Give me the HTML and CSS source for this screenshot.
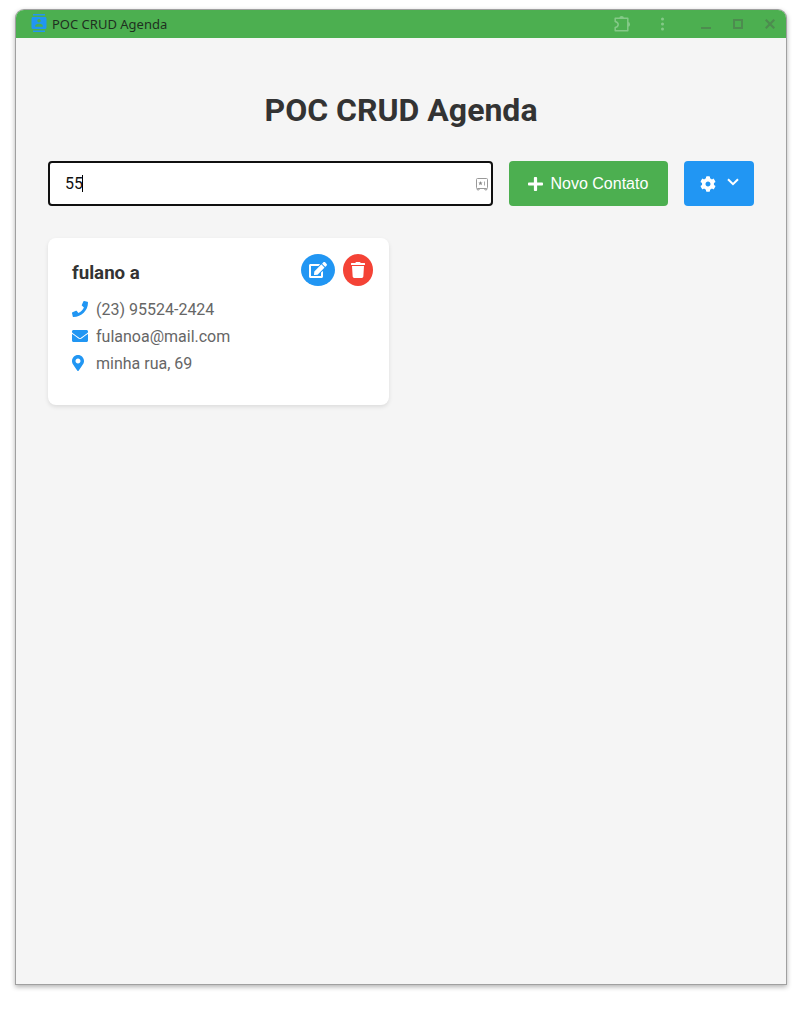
FILE: index.html
```html
<!DOCTYPE html>
<html lang="pt-BR">
<head>
<meta charset="utf-8">
<title>POC CRUD Agenda</title>
<link rel="stylesheet" href="styles.css">
</head>
<body>
<div class="window">
  <header class="titlebar">
    <svg class="app-icon" viewBox="0 0 24 24"><path fill="#2196f3" d="M20 0H4v2h16V0zM4 24h16v-2H4v2zM20 4H4c-1.100 0-2 .9-2 2v12c0 1.100.9 2 2 2h16c1.100 0 2-.9 2-2V6c0-1.100-.9-2-2-2zm-8 2.750c1.240 0 2.250 1.010 2.250 2.250s-1.010 2.250-2.250 2.250S9.750 10.240 9.750 9 10.760 6.750 12 6.750zM17 17H7v-1.500c0-1.670 3.330-2.500 5-2.500s5 .83 5 2.500V17z"/></svg>
    <span class="app-name">POC CRUD Agenda</span>
    <div class="window-tools">
      <svg width="17" height="18" viewBox="0 0 17 18" fill="#85c988"><path fill="none" stroke="#85c988" stroke-width="1.500" stroke-linejoin="round" d="M1.200 3.200H13.800V15.800H1.200V12.600C5.200 11.600 5.200 7.400 1.200 6.400Z"/><path d="M5.300 3.200a2.300 2.300 0 0 1 4.600 0zM13.800 7.100a2.300 2.300 0 0 1 0 4.600z"/></svg>
      <svg width="4" height="14" viewBox="0 0 4 14" fill="#85c988"><circle cx="2.500" cy="2" r="1.500"/><circle cx="2.500" cy="7" r="1.500"/><circle cx="2.500" cy="12" r="1.500"/></svg>
      <svg class="minimize" width="10" height="12" viewBox="0 0 10 12"><path fill="#4d8c4f" d="M0 9h10v2H0z"/></svg>
      <svg class="maximize" width="10" height="10" viewBox="0 0 10 10"><path fill="none" stroke="#4d8c4f" stroke-width="2" d="M1 1h8v8H1z"/></svg>
      <svg class="close" width="10" height="10" viewBox="0 0 10 10"><path stroke="#4d8c4f" stroke-width="2.200" d="M.7.7l8.600 8.600M9.300.7L.7 9.300"/></svg>
    </div>
  </header>
  <main class="content">
    <h1 class="title">POC CRUD Agenda</h1>
    <div class="toolbar">
      <div class="search"><span class="search-value">55</span><span class="caret"></span>
        <svg class="autofill" width="12" height="13" viewBox="0 0 12 13"><path fill="none" stroke="#999" d="M1.500.5h9q1 0 1 1v8q0 1-1 1h-9q-1 0-1-1v-8q0-1 1-1zM.9 10.500l.6 1.500h1.300l.8-1.500M8.400 10.500l.8 1.500h1.300l.6-1.500"/><path fill="#888" d="M4.500 3l.6 1.500 1.500.1-1.100 1 .4 1.600-1.400-.9-1.400.9.4-1.600-1.100-1 1.500-.1z"/><path fill="#aaa" d="M8 3.500h1v4H8z"/></svg>
      </div>
      <button class="button new-contact"><svg width="15" height="16" viewBox="0 0 448 512" preserveAspectRatio="none"><path fill="currentColor" d="M416 208H272V64c0-17.670-14.330-32-32-32h-32c-17.670 0-32 14.330-32 32v144H32c-17.670 0-32 14.330-32 32v32c0 17.670 14.330 32 32 32h144v144c0 17.670 14.330 32 32 32h32c17.670 0 32-14.330 32-32V304h144c17.670 0 32-14.330 32-32v-32c0-17.670-14.330-32-32-32z"/></svg><span>Novo Contato</span></button>
      <button class="button settings"><svg width="16" height="16" viewBox="0 0 512 512"><path fill="currentColor" d="M487.400 315.700l-42.600-24.600c4.300-23.200 4.300-47 0-70.200l42.600-24.600c4.900-2.800 7.100-8.600 5.500-14-11.100-35.600-30-67.800-54.700-94.600-3.800-4.100-10-5.100-14.800-2.300L380.800 110c-17.900-15.400-38.500-27.300-60.800-35.100V25.800c0-5.600-3.900-10.500-9.400-11.700-36.700-8.200-74.300-7.800-109.200 0-5.500 1.200-9.400 6.100-9.400 11.700V75c-22.200 7.900-42.800 19.800-60.800 35.100L88.700 85.500c-4.900-2.800-11-1.900-14.800 2.300-24.700 26.700-43.600 58.900-54.700 94.600-1.700 5.400.6 11.200 5.500 14L67.300 221c-4.300 23.200-4.300 47 0 70.200l-42.600 24.600c-4.900 2.800-7.100 8.600-5.500 14 11.100 35.600 30 67.800 54.700 94.600 3.800 4.100 10 5.100 14.800 2.300l42.600-24.600c17.900 15.400 38.500 27.300 60.800 35.100v49.200c0 5.600 3.900 10.500 9.400 11.700 36.700 8.200 74.300 7.800 109.200 0 5.500-1.200 9.400-6.100 9.400-11.700v-49.200c22.200-7.900 42.800-19.800 60.800-35.100l42.600 24.600c4.900 2.800 11 1.900 14.800-2.300 24.700-26.700 43.600-58.900 54.700-94.600 1.500-5.500-.7-11.300-5.600-14.100zM256 336c-44.100 0-80-35.900-80-80s35.900-80 80-80 80 35.900 80 80-35.900 80-80 80z"/></svg><svg class="chevron" width="12" height="8" viewBox="0 0 12 8"><path fill="none" stroke="currentColor" stroke-width="2" d="M1 1.200l5 5 5-5"/></svg></button>
    </div>
    <section class="contacts">
      <article class="card">
        <div class="card-info">
          <h2 class="name">fulano a</h2>
          <p class="detail"><svg width="16" height="16" viewBox="0 0 512 512"><path fill="currentColor" d="M493.400 24.600l-104-24c-11.300-2.600-22.900 3.300-27.500 13.900l-48 112c-4.200 9.800-1.400 21.300 6.900 28l60.600 49.600c-36 76.700-98.900 140.500-177.200 177.200l-49.600-60.600c-6.800-8.300-18.200-11.100-28-6.900l-112 48C3.900 366.500-2 378.100.6 389.400l24 104C27.100 504.200 36.700 512 48 512c256.100 0 464-207.500 464-464 0-11.200-7.700-20.900-18.600-23.400z"/></svg><span>(23) 95524-2424</span></p>
          <p class="detail"><svg width="16" height="16" viewBox="0 0 512 512"><path fill="currentColor" d="M502.300 190.800c3.900-3.100 9.700-.2 9.700 4.700V400c0 26.500-21.500 48-48 48H48c-26.500 0-48-21.500-48-48V195.600c0-5 5.700-7.800 9.700-4.700 22.400 17.400 52.100 39.500 154.100 113.600 21.100 15.400 56.700 47.800 92.200 47.600 35.700.3 72-32.800 92.300-47.600 102-74.100 131.600-96.300 154-113.700zM256 320c23.200.4 56.600-29.200 73.400-41.400 132.700-96.300 142.800-104.700 173.400-128.700 5.800-4.500 9.200-11.500 9.200-18.900v-19c0-26.500-21.500-48-48-48H48c-26.500 0-48 21.500-48 48v19c0 7.400 3.400 14.300 9.200 18.900 30.600 23.900 40.700 32.400 173.400 128.700 16.800 12.200 50.200 41.800 73.400 41.400z"/></svg><span>fulanoa@mail.com</span></p>
          <p class="detail"><svg class="pin" width="12" height="16" viewBox="0 0 384 512"><path fill="currentColor" d="M172.268 501.670C26.970 291.031 0 269.413 0 192 0 85.961 85.961 0 192 0s192 85.961 192 192c0 77.413-26.970 99.031-172.268 309.670-9.535 13.774-29.930 13.773-39.464 0zM192 272c44.183 0 80-35.817 80-80s-35.817-80-80-80-80 35.817-80 80 35.817 80 80 80z"/></svg><span>minha rua, 69</span></p>
        </div>
        <div class="actions">
          <button class="action edit"><svg width="18" height="16" viewBox="0 0 576 512"><path fill="currentColor" d="M402.600 83.200l90.200 90.200c3.800 3.800 3.800 10 0 13.800L274.400 405.600l-92.800 10.300c-12.400 1.400-22.900-9.100-21.500-21.500l10.300-92.800L388.800 83.200c3.800-3.800 10-3.800 13.800 0zm162-22.900l-48.800-48.800c-15.200-15.200-39.900-15.200-55.200 0l-35.400 35.400c-3.800 3.800-3.800 10 0 13.800l90.200 90.200c3.800 3.800 10 3.800 13.800 0l35.400-35.400c15.200-15.300 15.200-40 0-55.200zM384 346.200V448H64V128h229.800c3.200 0 6.200-1.300 8.500-3.500l40-40c7.600-7.600 2.200-20.500-8.500-20.500H48C21.500 64 0 85.500 0 112v352c0 26.500 21.500 48 48 48h352c26.500 0 48-21.500 48-48V306.200c0-10.700-12.900-16-20.500-8.500l-40 40c-2.200 2.300-3.500 5.300-3.500 8.500z"/></svg></button>
          <button class="action delete"><svg width="14" height="16" viewBox="0 0 448 512"><path fill="currentColor" d="M432 32H312l-9.400-18.700A24 24 0 0 0 281.100 0H166.800a23.720 23.720 0 0 0-21.400 13.300L136 32H16A16 16 0 0 0 0 48v32a16 16 0 0 0 16 16h416a16 16 0 0 0 16-16V48a16 16 0 0 0-16-16zM53.200 467a48 48 0 0 0 47.900 45h245.800a48 48 0 0 0 47.900-45L416 128H32z"/></svg></button>
        </div>
      </article>
    </section>
  </main>
</div>
</body>
</html>
```

FILE: styles.css
```css
* { box-sizing: border-box; }
body { margin: 0; padding: 10px 16px 32px; height: 1016px; background: #fff; font-family: Roboto, sans-serif; }
svg { display: block; flex: none; }
.window { height: 974px; background: #f5f5f5; border-radius: 8px 8px 0 0; box-shadow: 0 0 0 1px #a0a0a0, 0 2px 5px 1px rgba(0,0,0,.3); }
.titlebar { display: flex; align-items: center; height: 28px; padding: 0 11px 0 14px; background: #4caf50; border-radius: 8px 8px 0 0; }
.app-icon { width: 18px; height: 18px; margin-top: -2px; }
.app-name { margin-left: 4px; font: 13px/18px "Noto Sans", sans-serif; color: #1f3020; }
.window-tools { display: flex; align-items: center; margin-left: auto; }
.window-tools svg + svg { margin-left: 29px; }
.window-tools .minimize { margin-left: 37px; }
.window-tools .maximize, .window-tools .close { margin-left: 22px; }
.content { padding: 53px 32px 32px; }
.title { margin: 0 0 32px; font-size: 32px; line-height: 38px; font-weight: 700; text-align: center; color: #333; }
.toolbar { display: flex; gap: 16px; height: 45px; margin-bottom: 32px; }
.search { display: flex; align-items: center; flex: 1; padding: 0 3px 0 15px; border: 2px solid #101010; border-radius: 4px; background: #fff; font-size: 16px; color: #111; }
.caret { width: 1px; height: 17px; margin-left: -1px; background: #000; }
.autofill { margin: 1px 0 0 auto; }
.button { display: flex; align-items: center; border: 0; border-radius: 4px; color: #fff; font: 16px/18px "Liberation Sans", Arial, sans-serif; }
.new-contact { width: 159px; padding: 0 0 0 19px; gap: 7.500px; background: #4caf50; }
.settings { width: 70px; padding: 0 0 0 15.500px; gap: 11px; background: #2196f3; }
.chevron { margin-top: -3px; }
.contacts { display: grid; grid-template-columns: 1fr 1fr; gap: 24px; }
.card { display: flex; justify-content: space-between; height: 167px; padding: 24px 16px 24px 24px; background: #fff; border-radius: 8px; box-shadow: 0 2px 4px rgba(0,0,0,.1); }
.name { margin: 0 0 16px; font-size: 18.720px; line-height: 22px; font-weight: 700; color: #333; }
.detail { display: flex; align-items: flex-start; gap: 8px; margin: 0 0 8px; font-size: 16px; line-height: 19px; color: #666; }
.detail svg { margin-top: 1px; color: #2196f3; }
.detail .pin { margin-right: 4px; }
.actions { display: flex; gap: 8px; height: 32px; margin-top: -8px; }
.action { padding: 8px; border: 0; border-radius: 50%; color: #fff; }
.edit { background: #2196f3; }
.delete { background: #f44336; }
```
